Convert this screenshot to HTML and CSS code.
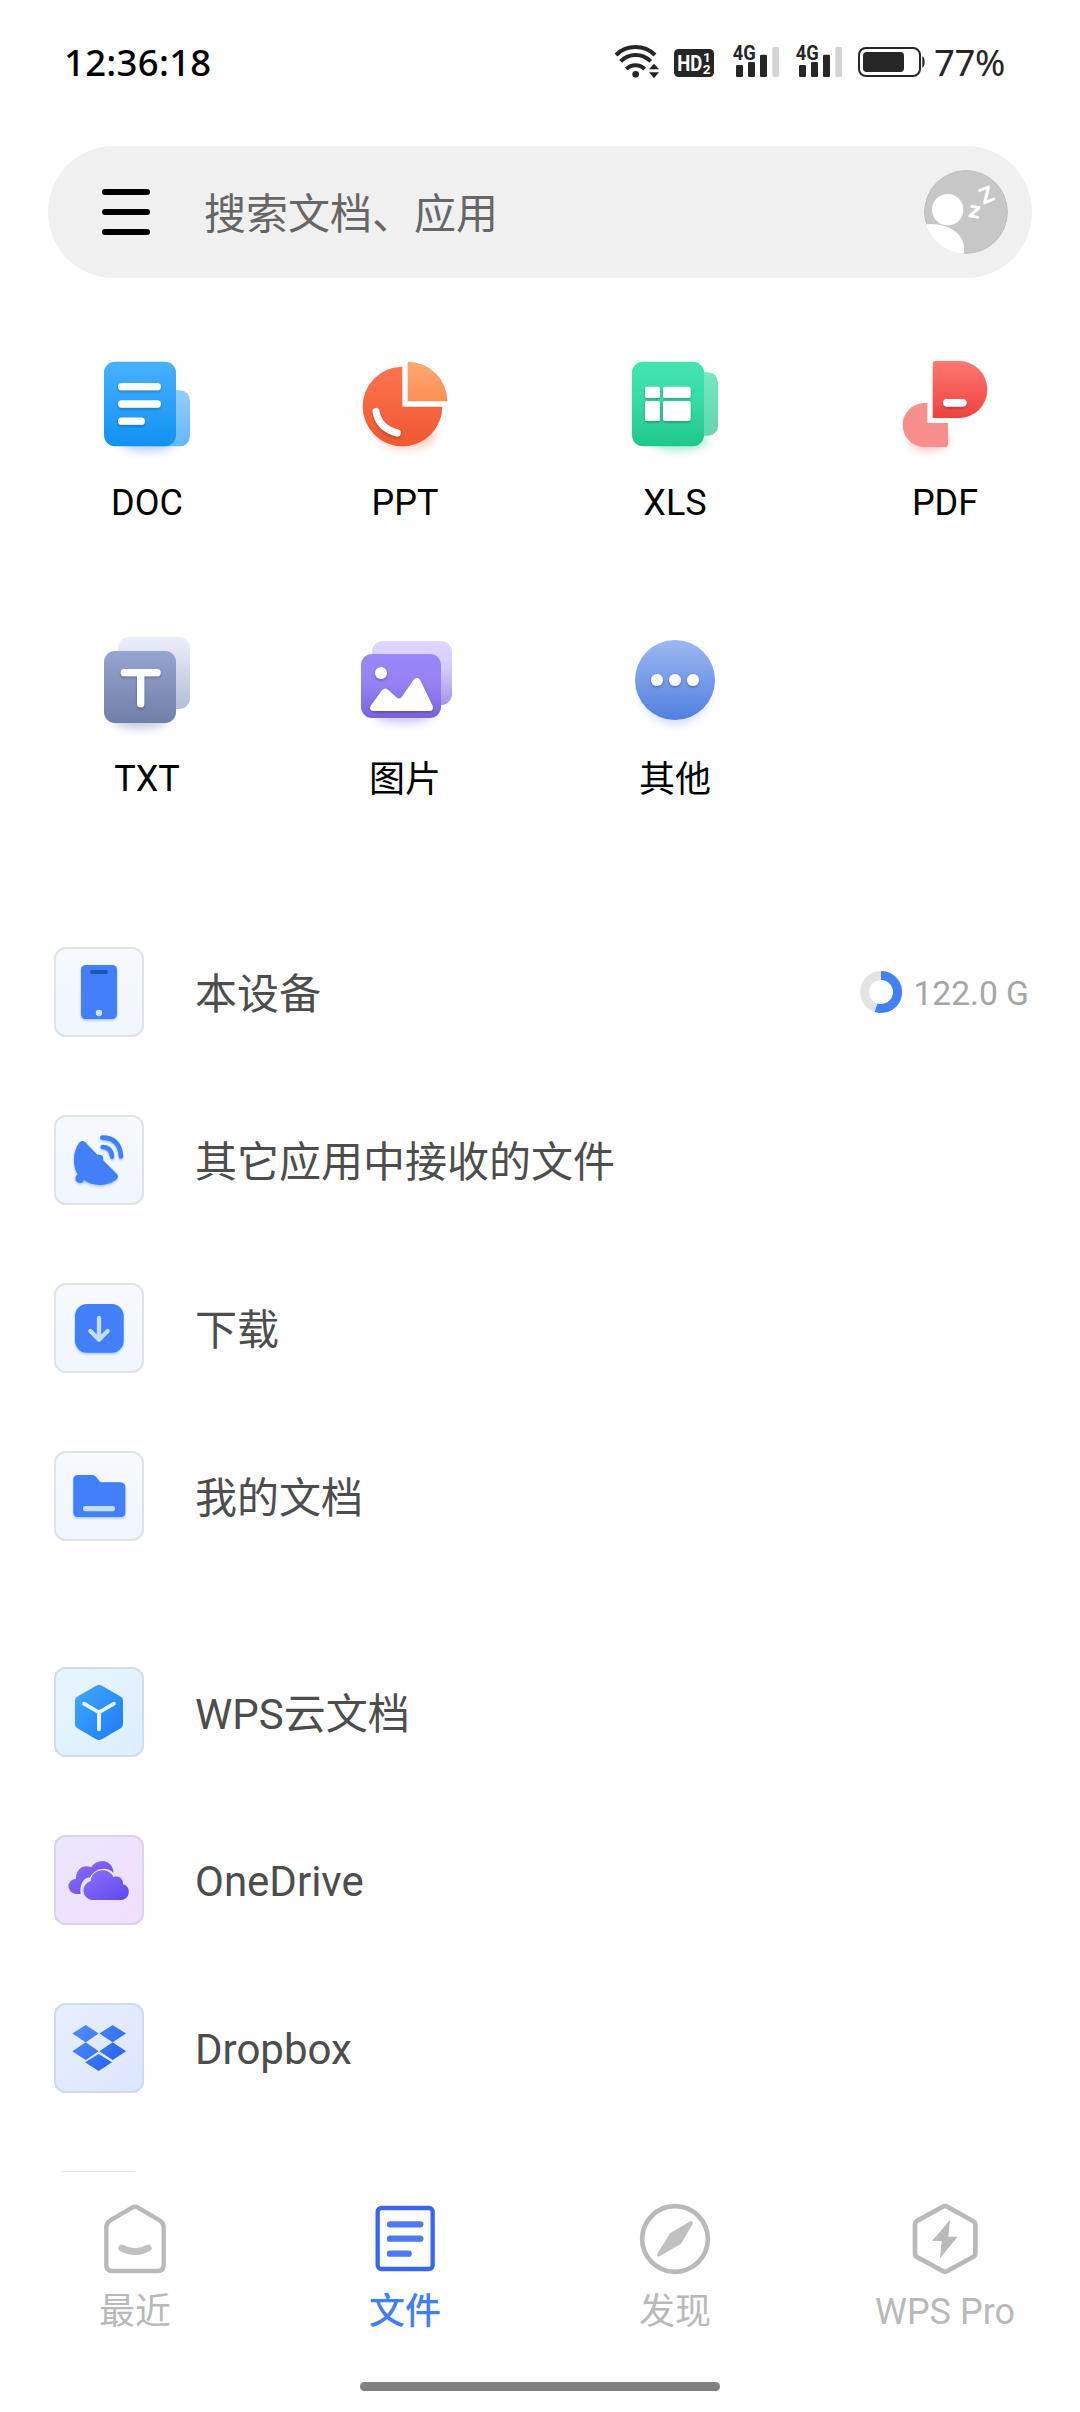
FILE: index.html
```html
<!DOCTYPE html>
<html lang="zh-CN">
<head>
<meta charset="utf-8">
<title>文件</title>
<link rel="stylesheet" href="styles.css">
</head>
<body>
<svg class="defs" aria-hidden="true">
  <defs>
    <filter id="blur" x="-50%" y="-50%" width="200%" height="200%"><feGaussianBlur stdDeviation="12"/></filter>
    <filter id="soft" x="-20%" y="-20%" width="140%" height="160%"><feDropShadow dx="0" dy="4" stdDeviation="3" flood-color="#223" flood-opacity=".35"/></filter>
    <filter id="tint" x="-20%" y="-20%" width="140%" height="140%"><feDropShadow dx="0" dy="4" stdDeviation="3" flood-color="#4080fa" flood-opacity=".45"/></filter>
    <linearGradient id="doc" x2="0" y2="1"><stop stop-color="#48b0ff"/><stop offset="1" stop-color="#1092f3"/></linearGradient>
    <linearGradient id="doc2" x2="0" y2="1"><stop stop-color="#94cdff"/><stop offset="1" stop-color="#67b7fb"/></linearGradient>
    <linearGradient id="ppt" x2="0" y2="1"><stop stop-color="#ff7352"/><stop offset="1" stop-color="#ee582e"/></linearGradient>
    <linearGradient id="ppt2" x2="0" y2="1"><stop stop-color="#ffa873"/><stop offset="1" stop-color="#fd8f54"/></linearGradient>
    <linearGradient id="xls" x2="0" y2="1"><stop stop-color="#43e5b1"/><stop offset=".45" stop-color="#37dba6"/><stop offset="1" stop-color="#1fc78c"/></linearGradient>
    <linearGradient id="xls2" x2="0" y2="1"><stop stop-color="#74e8c2"/><stop offset="1" stop-color="#66d4ae"/></linearGradient>
    <linearGradient id="pdf" x2="0" y2="1"><stop stop-color="#ff7871"/><stop offset="1" stop-color="#ef413f"/></linearGradient>
    <linearGradient id="txt" x2="0" y2="1"><stop stop-color="#97a4d2"/><stop offset="1" stop-color="#707fa5"/></linearGradient>
    <linearGradient id="txt2" x2="0" y2="1"><stop stop-color="#eceefd"/><stop offset="1" stop-color="#b5bed6"/></linearGradient>
    <linearGradient id="pic" x2="0" y2="1"><stop stop-color="#9b88f7"/><stop offset=".5" stop-color="#9480f3"/><stop offset="1" stop-color="#7a62dc"/></linearGradient>
    <linearGradient id="pic2" x2="0" y2="1"><stop stop-color="#ded6ff"/><stop offset=".4" stop-color="#d6ccfc"/><stop offset="1" stop-color="#a594ea"/></linearGradient>
    <linearGradient id="more" x2="0" y2="1"><stop stop-color="#9db7f3"/><stop offset="1" stop-color="#517fe0"/></linearGradient>
    <linearGradient id="cube" x2="1" y2="1"><stop stop-color="#3fabf8"/><stop offset="1" stop-color="#1e78ff"/></linearGradient>
    <linearGradient id="cloud" x2="1" y2="1"><stop stop-color="#9170fc"/><stop offset="1" stop-color="#5c49ee"/></linearGradient>
    <linearGradient id="box" gradientUnits="userSpaceOnUse" x1="130" y1="140" x2="250" y2="270"><stop stop-color="#4d90ff"/><stop offset="1" stop-color="#2a62f2"/></linearGradient>
    <symbol id="signal" viewBox="456 72 144 108">
      <g fill="#262626"><rect x="468" y="135" width="21" height="36" rx="4"/><rect x="504" y="126" width="21" height="45" rx="4"/><rect x="540" y="104" width="21" height="67" rx="4"/></g>
      <rect x="577" y="81" width="20" height="90" rx="4" fill="#d4d4d4"/>
      <text x="458" y="119" font-family="Roboto, sans-serif" font-size="61" font-weight="700" fill="#262626" textLength="69" lengthAdjust="spacingAndGlyphs">4G</text>
    </symbol>
  </defs>
</svg>

<div class="screen">
  <header class="status">
    <time class="clock">12:36:18</time>
    <div class="indicators">
      <svg class="wifi" viewBox="105 72 135 108">
        <g fill="none" stroke="#262626" stroke-width="12">
          <path d="M108 105A84 84 0 0 1 225 105"/><path d="M122 124A63 63 0 0 1 212 124"/><path d="M139 147A39 39 0 0 1 194 147"/>
        </g>
        <circle cx="167" cy="163" r="10" fill="#262626"/>
        <path d="M222 131L237 148H207ZM222 175L237 157H207Z" fill="#262626"/>
      </svg>
      <svg class="hd" viewBox="282 72 120 108" font-family="Roboto, sans-serif" font-weight="700" fill="#fff">
        <rect x="282" y="87" width="120" height="84" rx="14" fill="#262626"/>
        <text x="292" y="152" font-size="66" textLength="75" lengthAdjust="spacingAndGlyphs">HD</text>
        <text x="369" y="127" font-size="41">1</text><text x="368" y="161" font-size="41">2</text>
      </svg>
      <svg class="signal"><use href="#signal"/></svg>
      <svg class="signal signal-second"><use href="#signal"/></svg>
      <svg class="battery" viewBox="831 72 207 108">
        <rect x="837" y="84" width="183" height="84" rx="21" fill="none" stroke="#262626" stroke-width="6"/>
        <rect x="849" y="96" width="123" height="60" rx="11" fill="#262626"/>
        <path d="M1027 109C1036 109 1036 143 1027 143Z" fill="#262626"/>
      </svg>
      <span class="percent">77%</span>
    </div>
  </header>

  <div class="search">
    <div class="menu"><i></i><i></i><i></i></div>
    <span class="hint">搜索文档、应用</span>
    <svg class="avatar" viewBox="1032 450 252 252">
      <clipPath id="round"><circle cx="1158" cy="576" r="126"/></clipPath>
      <g clip-path="url(#round)">
        <circle cx="1158" cy="576" r="126" fill="#c7c7c7"/>
        <circle cx="1158" cy="576" r="124" fill="none" stroke="#bfbfbf" stroke-width="3"/>
        <circle cx="1103" cy="569" r="47" fill="#fff"/>
        <path d="M1030 614Q1062 609 1096 619Q1160 642 1151 704H1030Z" fill="#fff"/>
        <g fill="#fff" font-family="Inter, sans-serif" font-weight="700">
          <text transform="translate(1208 555) rotate(-22)" font-size="66">Z</text>
          <text transform="translate(1161 590) rotate(10)" font-size="68">z</text>
        </g>
      </g>
    </svg>
  </div>

  <section class="types">
    <div class="type">
      <svg viewBox="117 48 288 288">
        <ellipse cx="262" cy="310" rx="80" ry="24" fill="#3b7df5" opacity=".35" filter="url(#blur)"/>
        <rect x="262" y="151" width="128" height="168" rx="30" fill="url(#doc2)"/>
        <rect x="132" y="65" width="216" height="254" rx="33" fill="url(#doc)"/>
        <g stroke="#fff" stroke-width="22" stroke-linecap="round" filter="url(#soft)"><path d="M185 140H292M185 192H292M185 243.500H244"/></g>
      </svg>
      <span>DOC</span>
    </div>
    <div class="type">
      <svg viewBox="891 48 288 288">
        <ellipse cx="1040" cy="284" rx="86" ry="42" fill="#f26a40" opacity=".35" filter="url(#blur)"/>
        <path d="M1027 80V200H1147A119.500 119.500 0 1 1 1027 80Z" fill="url(#ppt)"/>
        <path d="M1043 65A119 119 0 0 1 1162 184H1043Z" fill="url(#ppt2)"/>
        <path d="M948 214Q956 264 1012 279" fill="none" stroke="#fff" stroke-width="21" stroke-linecap="round" filter="url(#soft)"/>
      </svg>
      <span>PPT</span>
    </div>
    <div class="type">
      <svg viewBox="81 48 288 288">
        <ellipse cx="235" cy="300" rx="88" ry="32" fill="#29cf95" opacity=".4" filter="url(#blur)"/>
        <rect x="226" y="97" width="128" height="190" rx="30" fill="url(#xls2)"/>
        <rect x="96" y="65" width="216" height="254" rx="33" fill="url(#xls)"/>
        <g fill="#fff" filter="url(#soft)"><rect x="135" y="140" width="45" height="34" rx="6"/><rect x="189" y="140" width="83" height="34" rx="6"/><rect x="135" y="183" width="45" height="60" rx="6"/><rect x="189" y="183" width="83" height="60" rx="6"/></g>
      </svg>
      <span>XLS</span>
    </div>
    <div class="type">
      <svg viewBox="891 48 288 288">
        <ellipse cx="988" cy="302" rx="58" ry="28" fill="#f5534f" opacity=".4" filter="url(#blur)"/>
        <path d="M982 189V249H1044V311Q1044 321 1034 321H973A65 66 0 0 1 973 189Z" fill="#f88f8c"/>
        <path d="M1007 63H1077A85 85.500 0 0 1 1077 234H998V72Q998 63 1007 63Z" fill="url(#pdf)"/>
        <rect x="1029" y="177" width="71" height="23" rx="11.500" fill="#fff" filter="url(#soft)"/>
      </svg>
      <span>PDF</span>
    </div>
    <div class="type">
      <svg viewBox="117 66 288 288">
        <ellipse cx="240" cy="330" rx="84" ry="26" fill="#7584b5" opacity=".4" filter="url(#blur)"/>
        <rect x="174" y="81" width="216" height="216" rx="33" fill="url(#txt2)"/>
        <rect x="132" y="123" width="216" height="216" rx="33" fill="url(#txt)"/>
        <path d="M193 188H291M242 188V281" stroke="#fff" stroke-width="22" stroke-linecap="round" filter="url(#soft)"/>
      </svg>
      <span>TXT</span>
    </div>
    <div class="type">
      <svg viewBox="891 66 288 288">
        <ellipse cx="1030" cy="316" rx="84" ry="24" fill="#7a62ec" opacity=".35" filter="url(#blur)"/>
        <rect x="936" y="93" width="240" height="192" rx="33" fill="url(#pic2)"/>
        <rect x="903" y="132" width="240" height="192" rx="33" fill="url(#pic)"/>
        <g fill="#fff" filter="url(#soft)"><circle cx="963" cy="189" r="18"/><path d="M932 287L965 242Q975 230 986 241L1009 262Q1018 270 1025 261L1060 211Q1071 196 1081 211L1118 288Q1122 303 1108 303H941Q926 301 932 287Z"/></g>
      </svg>
      <span class="cjk">图片</span>
    </div>
    <div class="type">
      <svg viewBox="81 66 288 288">
        <circle cx="225" cy="240" r="104" fill="#5d8bf5" opacity=".28" filter="url(#blur)"/>
        <circle cx="225" cy="210" r="120" fill="url(#more)"/>
        <g fill="#fff" filter="url(#soft)"><circle cx="171" cy="210" r="18"/><circle cx="225" cy="210" r="18"/><circle cx="279" cy="210" r="18"/></g>
      </svg>
      <span class="cjk">其他</span>
    </div>
  </section>

  <main class="places">
    <div class="group">
      <div class="place">
        <svg class="tile local" viewBox="72 81 270 270">
          <g filter="url(#tint)"><rect x="153" y="135" width="108" height="162" rx="14" fill="#4280fa"/></g>
          <rect x="180" y="150" width="54" height="12" rx="6" fill="#1a56b8"/><circle cx="207" cy="279" r="9.500" fill="#cfe3ff"/>
        </svg>
        <span class="name cjk">本设备</span>
        <svg class="usage" viewBox="0 0 44 44"><circle cx="22" cy="22" r="16.500" fill="none" stroke="#e3e3e3" stroke-width="9"/><path d="M22 5.500A16.500 16.500 0 1 1 17 37.700" fill="none" stroke="#4280fa" stroke-width="9"/></svg>
        <span class="size">122.0 G</span>
      </div>
      <div class="place">
        <svg class="tile local" viewBox="72 585 270 270">
          <g filter="url(#tint)" fill="#4280fa">
            <path d="M147 668Q156 658 166 667L202 704Q213 703 218 709Q221 715 219 720L261 762Q267 769 261 776C240 797 191 803 162 780Q161 789 150 789Q137 788 136 777Q136 767 143 763C127 738 128 697 147 668Z"/>
            <path d="M218 681Q244 682 246 710M217 653Q269 653 273 709" fill="none" stroke="#4280fa" stroke-width="14" stroke-linecap="round"/>
          </g>
        </svg>
        <span class="name cjk">其它应用中接收的文件</span>
      </div>
      <div class="place">
        <svg class="tile local" viewBox="72 69 270 270">
          <rect x="135" y="132" width="146" height="146" rx="36" fill="#4280fa" filter="url(#tint)"/>
          <path d="M207 174V238M181 213L207 239L233 213" fill="none" stroke="#c5ddff" stroke-width="13" stroke-linecap="round" stroke-linejoin="round"/>
        </svg>
        <span class="name cjk">下载</span>
      </div>
      <div class="place">
        <svg class="tile local" viewBox="72 573 270 270">
          <path d="M144 645H187Q194 645 198 651L212 667H272Q286 668 286 682V758Q286 771 272 771H144Q130 771 130 757V659Q130 645 144 645Z" fill="#4280fa" filter="url(#tint)"/>
          <rect x="159" y="738" width="96" height="16" rx="7" fill="#c5ddff"/>
        </svg>
        <span class="name cjk">我的文档</span>
      </div>
    </div>
    <div class="group">
      <div class="place">
        <svg class="tile wps" viewBox="72 81 270 270">
          <path d="M197 138Q207 132 217 138L273 170Q279 174 279 181V253Q279 260 273 264L217 297Q207 303 197 297L141 264Q135 260 135 253V181Q135 174 141 170Z" fill="url(#cube)"/>
          <path d="M162 191L207 217L252 191M207 217V268" fill="none" stroke="#e9f6ff" stroke-width="11.500" stroke-linecap="round"/>
        </svg>
        <span class="name cjk">WPS云文档</span>
      </div>
      <div class="place">
        <svg class="tile onedrive" viewBox="72 585 270 270">
          <path d="M152 762H139A23 23 0 0 1 138 716C138 684 163 672 183 682C205 650 249 660 251 699C232 677 193 684 180 712C158 712 148 740 152 762Z" fill="url(#cloud)"/>
          <path d="M187 780A29 29 0 0 1 182 723C184 684 238 680 250 711C268 706 280 718 279 733C304 738 302 778 275 780Z" fill="url(#cloud)"/>
        </svg>
        <span class="name">OneDrive</span>
      </div>
      <div class="place">
        <svg class="tile dropbox" viewBox="72 69 270 270">
          <path d="M167 135L206 160.500L167 187L127 160.500ZM248 135L288 160.500L248 187L208 160.500ZM167 187L206 214L167 240L127 214ZM248 187L288 214L248 240L208 214ZM206 222L246 247L206 273L165 247Z" fill="url(#box)"/>
        </svg>
        <span class="name">Dropbox</span>
      </div>
      <div class="place"><svg class="tile"></svg></div>
    </div>
  </main>

  <nav class="tabs">
    <div class="tab">
      <svg viewBox="117 39 216 216" fill="none" stroke="#b9b9b9" stroke-linecap="round">
        <path d="M216 53Q225 47 234 53L299 91Q311 98 311 111V225Q311 243 293 243H157Q139 243 139 225V111Q139 98 151 91Z" stroke-width="13"/>
        <path d="M185 174Q225 196 265 174" stroke="#c0c0c0" stroke-width="20"/>
      </svg>
      <span>最近</span>
    </div>
    <div class="tab active">
      <svg viewBox="927 39 216 216" fill="none" stroke="#3966ee" stroke-linecap="round">
        <rect x="953" y="54" width="165" height="183" rx="11" stroke-width="13"/>
        <path d="M990 103H1081M990 146H1081M990 191H1046" stroke="#4f78f3" stroke-width="19"/>
      </svg>
      <span>文件</span>
    </div>
    <div class="tab">
      <svg viewBox="237 39 216 216">
        <circle cx="345" cy="147" r="98.500" fill="none" stroke="#b9b9b9" stroke-width="14"/>
        <path d="M330 130L391 94Q401 92 398 102L363 161L299 199Q289 201 292 191Z" fill="#c0c0c0"/>
      </svg>
      <span>发现</span>
    </div>
    <div class="tab">
      <svg viewBox="1044 39 216 216">
        <path d="M1145 50Q1152 46 1159 50L1236 93Q1243 97 1243 105V189Q1243 197 1236 201L1159 243Q1152 247 1145 243L1068 201Q1062 197 1062 189V105Q1062 97 1068 93Z" fill="none" stroke="#b9b9b9" stroke-width="14"/>
        <path d="M1167 90L1162 140H1190L1137 205L1142 153H1113Z" fill="#b9b9b9"/>
      </svg>
      <span>WPS Pro</span>
    </div>
  </nav>
  <div class="home-bar"></div>
</div>
</body>
</html>
```

FILE: styles.css
```css
* { box-sizing: border-box; }

body {
  margin: 0;
  background: #fefefe;
  font-family: Roboto, "Noto Sans CJK SC", sans-serif;
  color: #000;
}

svg { display: block; flex: none; overflow: visible; }

.defs { position: absolute; width: 0; height: 0; }

.screen {
  display: flex;
  flex-direction: column;
  width: 1080px;
  height: 2412px;
  overflow: hidden;
}

/* status bar */
.status {
  display: flex;
  align-items: center;
  justify-content: space-between;
  flex: none;
  height: 124px;
  padding-left: 64px;
  font-family: "Noto Sans", sans-serif;
  font-size: 36.5px;
}
.clock { font-weight: 500; letter-spacing: .3px; }
.indicators { display: flex; align-items: center; color: #262626; }
.indicators svg { height: 36px; }
.wifi { width: 45px; }
.hd { width: 40px; margin-left: 14px; }
.signal { width: 48px; margin-left: 18px; }
.signal-second { margin-left: 15px; }
.battery { width: 69px; margin-left: 14px; }
.percent { width: 146px; margin-left: 8px; letter-spacing: -.4px; }

/* search */
.search {
  display: flex;
  align-items: center;
  flex: none;
  height: 132px;
  margin: 22px 48px 0;
  padding: 0 24px 0 54px;
  border-radius: 66px;
  background: #f0f0f0;
}
.menu { display: flex; flex-direction: column; gap: 14px; width: 48px; }
.menu i { height: 6px; border-radius: 3px; background: #000; }
.hint {
  flex: 1;
  margin-left: 54px;
  padding-top: 6px;
  font-size: 42px;
  line-height: 60px;
  color: #666;
}
.avatar { width: 84px; height: 84px; }

/* file types */
.types {
  display: grid;
  grid-template-columns: repeat(4, 270px);
  grid-auto-rows: 276px;
  flex: none;
  margin-top: 78px;
}
.type {
  display: flex;
  flex-direction: column;
  align-items: center;
  gap: 30px;
  font-size: 36px;
  line-height: 42px;
}
.type:nth-child(4n + 1) { padding-left: 24px; }
.type svg { width: 96px; height: 96px; }
.type .cjk { padding-top: 1px; }

/* locations */
.places {
  display: flex;
  flex-direction: column;
  gap: 48px;
  flex: none;
  height: 1264px;
  overflow: hidden;
}
.place {
  display: flex;
  align-items: center;
  height: 168px;
  padding: 0 51px 0 54px;
}
.tile {
  width: 90px;
  height: 90px;
  border-radius: 12px;
  background: #fff;
  box-shadow: inset 0 0 0 2px #dfe2ea;
}
.local { background: linear-gradient(#f6faff, #f0f5ff); }
.wps { background: linear-gradient(135deg, #e8f5ff, #dceeff); box-shadow: inset 0 0 0 2px #d3dce8; }
.onedrive { background: linear-gradient(135deg, #ece6ff, #f0defd); box-shadow: inset 0 0 0 2px #dad3e8; }
.dropbox { background: linear-gradient(135deg, #e9efff, #dbe5ff); box-shadow: inset 0 0 0 2px #d2d9e9; }
.name {
  flex: 1;
  margin-left: 51px;
  padding-top: 3px;
  font-size: 42px;
  line-height: 60px;
  color: #4d4d4d;
}
.name.cjk { padding-top: 6px; }
.usage { width: 44px; height: 44px; }
.size { margin-left: 10px; padding-top: 2px; font-size: 33.6px; color: #a6a6a6; }

/* bottom tabs */
.tabs {
  display: grid;
  grid-template-columns: repeat(4, 270px);
  flex: none;
  height: 210px;
  padding-top: 31px;
  color: #b9b9b9;
}
.tab {
  display: flex;
  flex-direction: column;
  align-items: center;
  gap: 16px;
  font-size: 36px;
  line-height: 42px;
}
.tab svg { width: 72px; height: 72px; }
.active { color: #417ff9; font-weight: 500; }
.home-bar {
  flex: none;
  width: 360px;
  height: 9px;
  margin: 0 auto;
  border-radius: 5px;
  background: #808080;
}
```
